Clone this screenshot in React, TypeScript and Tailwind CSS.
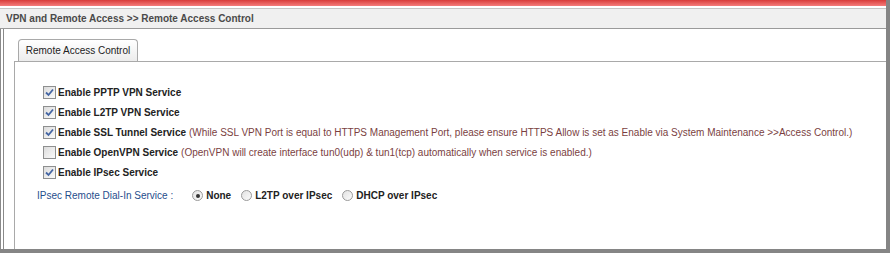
import React from "react";

const Check = ({ on }: { on?: boolean }) => (
  <span className="inline-flex h-[13px] w-[13px] shrink-0 items-center justify-center border border-[#8e8f8f] bg-gradient-to-br from-[#dcdcdc] to-[#fbfbfb]">
    {on && (
      <svg width="9" height="9" viewBox="0 0 9 9">
        <path d="M1 4.5 L3.5 7 L8 1.5" fill="none" stroke="#4465a3" strokeWidth="1.8" />
      </svg>
    )}
  </span>
);

const Radio = ({ on }: { on?: boolean }) => (
  <span className="inline-flex h-[11px] w-[11px] shrink-0 items-center justify-center rounded-full border border-[#9a9a9a] bg-gradient-to-br from-[#e2e2e2] to-[#fbfbfb]">
    {on && <span className="h-[4px] w-[4px] rounded-full bg-[#333]" />}
  </span>
);

const rows = [
  { on: true, label: "Enable PPTP VPN Service" },
  { on: true, label: "Enable L2TP VPN Service" },
  {
    on: true,
    label: "Enable SSL Tunnel Service",
    note: "(While SSL VPN Port is equal to HTTPS Management Port, please ensure HTTPS Allow is set as Enable via System Maintenance >>Access Control.)",
  },
  {
    on: false,
    label: "Enable OpenVPN Service",
    note: "(OpenVPN will create interface tun0(udp) & tun1(tcp) automatically when service is enabled.)",
  },
  { on: true, label: "Enable IPsec Service" },
];

const App = () => {
  return (
    <div className="flex h-[253px] w-[890px] flex-col overflow-hidden whitespace-nowrap border-b-[4px] border-r-[4px] border-[#858585] bg-white font-['Liberation_Sans',Arial,sans-serif] text-[10px]">
      <div className="h-[6px] shrink-0 bg-gradient-to-b from-[#d83a3a] to-[#f47b7b]" />
      <div className="h-[2px] shrink-0 bg-white" />
      <div className="flex h-[21px] shrink-0 items-center border-y border-b-[#9a9a9a] border-t-[#c4c4c4] bg-[#f0f0f0] pl-[6px] font-bold text-[#4a4a4a]">
        VPN and Remote Access &gt;&gt; Remote Access Control
      </div>
      <div className="flex flex-1 border-l-[4px] border-double border-[#8a8a8a] pl-[10px]">
        <div className="flex flex-1 flex-col pt-[10px]">
          <div className="ml-[4px] flex h-[22px] w-[120px] items-center justify-center rounded-t-[4px] border border-b-0 border-[#a9a9a9] bg-gradient-to-b from-[#ffffff] to-[#ececec] text-[#222]">
            Remote Access Control
          </div>
          <div className="flex flex-1 flex-col border-l border-t border-[#a9a9a9] pl-[28px] pt-[24px]">
            <div className="flex flex-col gap-[7px]">
              {rows.map((r) => (
                <div key={r.label} className="flex h-[13px] items-center gap-[2px]">
                  <Check on={r.on} />
                  <span className="font-bold text-[#222]">{r.label}</span>
                  {r.note && <span className="ml-[1px] text-[#7b3f3f]">{r.note}</span>}
                </div>
              ))}
            </div>
            <div className="-ml-[6px] mt-[9px] flex items-center text-[#1f4e8c]">
              <span>IPsec Remote Dial-In Service :</span>
              <span className="ml-[19px] flex items-center gap-[3px] text-[#222]">
                <Radio on />
                <span className="font-bold">None</span>
              </span>
              <span className="ml-[10px] flex items-center gap-[3px] text-[#222]">
                <Radio />
                <span className="font-bold">L2TP over IPsec</span>
              </span>
              <span className="ml-[10px] flex items-center gap-[3px] text-[#222]">
                <Radio />
                <span className="font-bold">DHCP over IPsec</span>
              </span>
            </div>
          </div>
        </div>
      </div>
    </div>
  );
};

export default App;
